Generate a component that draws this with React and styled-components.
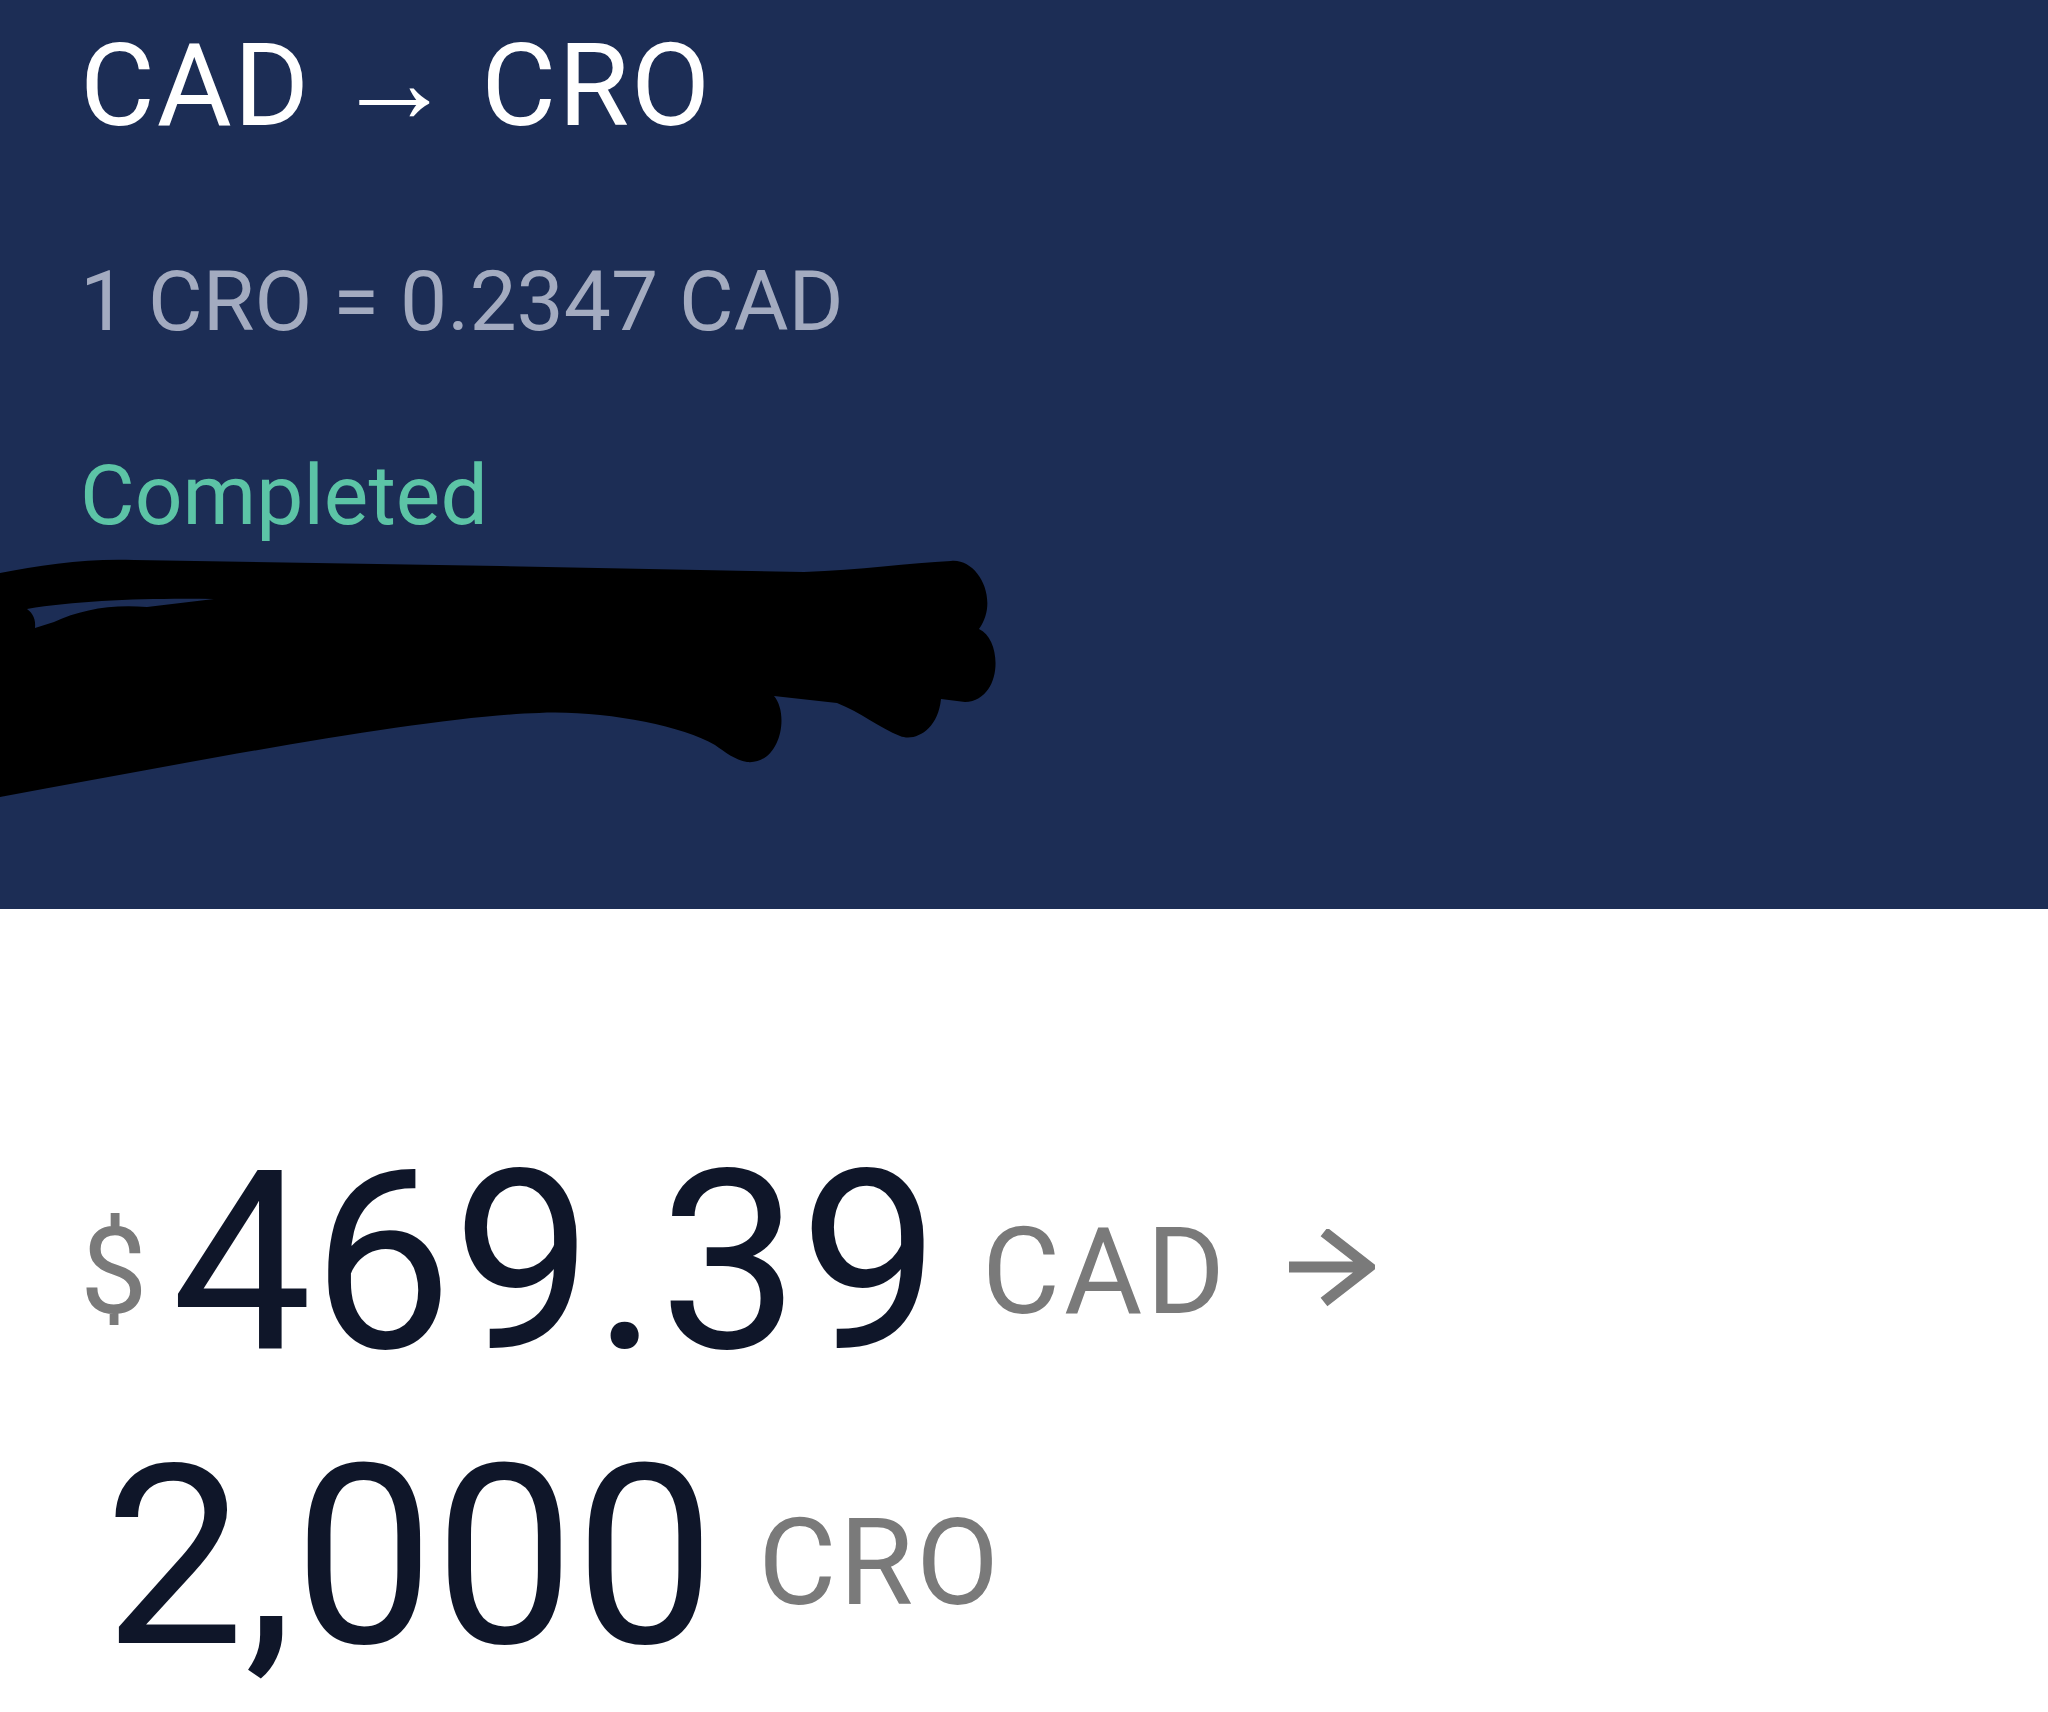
import React from "react";
import styled, { createGlobalStyle } from "styled-components";

const GlobalStyle = createGlobalStyle`
  html, body {
    margin: 0;
    padding: 0;
    background: #ffffff;
    font-family: Roboto, "Noto Sans", "Liberation Sans", sans-serif;
  }
`;

const Page = styled.div`
  width: 2048px;
  min-height: 1712px;
  background: #ffffff;
  overflow: hidden;
`;

const Header = styled.header`
  position: relative;
  height: 909px;
  box-sizing: border-box;
  padding: 28px 0 0 80px;
  background: #1c2d55;
  display: flex;
  flex-direction: column;
  align-items: flex-start;
`;

const Title = styled.h1`
  margin: 0;
  font-size: 115px;
  font-weight: 400;
  line-height: 1;
  color: #ffffff;
  white-space: nowrap;
  letter-spacing: 2px;
`;

const Arrow = styled.span`
  display: inline-block;
  margin: 0 26px 0 24px;
  font-size: 118px;
  line-height: 0;
  vertical-align: 3px;
`;

const Rate = styled.div`
  margin-top: 117px;
  font-size: 84px;
  line-height: 1;
  color: #a3abc0;
  white-space: nowrap;
`;

const Status = styled.div`
  margin-top: 110px;
  font-size: 84px;
  line-height: 1;
  color: #5cc4a6;
`;

const Scribble = styled.svg`
  position: absolute;
  left: 0;
  top: 0;
  pointer-events: none;
`;

const Amounts = styled.section`
  padding: 229px 0 0 80px;
  display: flex;
  flex-direction: column;
  gap: 45px;
`;

const AmountRow = styled.div`
  padding-left: ${(p) => p.$indent || 0}px;
  font-size: 250px;
  line-height: 1;
  color: #0f1629;
  white-space: nowrap;
`;

const Unit = styled.span`
  display: inline-block;
  font-size: 120px;
  line-height: 1;
  color: #7a7a7a;
  vertical-align: ${(p) => p.$raise}px;
  margin-left: ${(p) => p.$before || 0}px;
  margin-right: ${(p) => p.$after || 0}px;
  letter-spacing: ${(p) => p.$spacing || 0}px;
`;

const Value = styled.span`
  letter-spacing: 0;
`;

const ArrowIcon = styled.svg`
  display: inline-block;
  width: 86px;
  height: 82px;
  margin-left: 60px;
  vertical-align: 37px;
`;

export default function App() {
  return (
    <Page>
      <GlobalStyle />
      <Header>
        <Title>
          CAD<Arrow>→</Arrow>CRO
        </Title>
        <Rate>1 CRO = 0.2347 CAD</Rate>
        <Status>Completed</Status>
        <Scribble width="2048" height="909" viewBox="0 0 2048 909">
          <path
            fill="#000000"
            d="M0,573 C40,565 90,558 134,560 L500,566 L804,572 C860,570 910,563 951,561
               C978,558 1000,600 979,629
               C1003,640 1003,700 965,702
               L941,699
               C938,730 915,742 900,736
               C880,728 860,712 837,703
               L774,696
               C790,715 780,765 747,762
               C735,760 725,752 715,745
               C680,725 600,710 539,713
               C430,716 200,760 0,797 Z"
          />
          <path
            fill="#1c2d55"
            d="M27,609 C80,600 150,598 214,599 L147,607 C110,604 80,610 54,622 L35,628 C36,620 33,613 27,609 Z"
          />
        </Scribble>
      </Header>
      <Amounts>
        <AmountRow>
          <Unit $raise={35} $after={24}>$</Unit>
          <Value>469.39</Value>
          <Unit $raise={35} $before={42} $spacing={4}>CAD</Unit>
          <ArrowIcon viewBox="0 0 86 82">
            <path
              d="M0,38 H80 M35,3 L80,38 L35,73"
              fill="none"
              stroke="#7a7a7a"
              strokeWidth="11"
            />
          </ArrowIcon>
        </AmountRow>
        <AmountRow $indent={24}>
          <Value>2,000</Value>
          <Unit $raise={39} $before={43} $spacing={3}>CRO</Unit>
        </AmountRow>
      </Amounts>
    </Page>
  );
}
